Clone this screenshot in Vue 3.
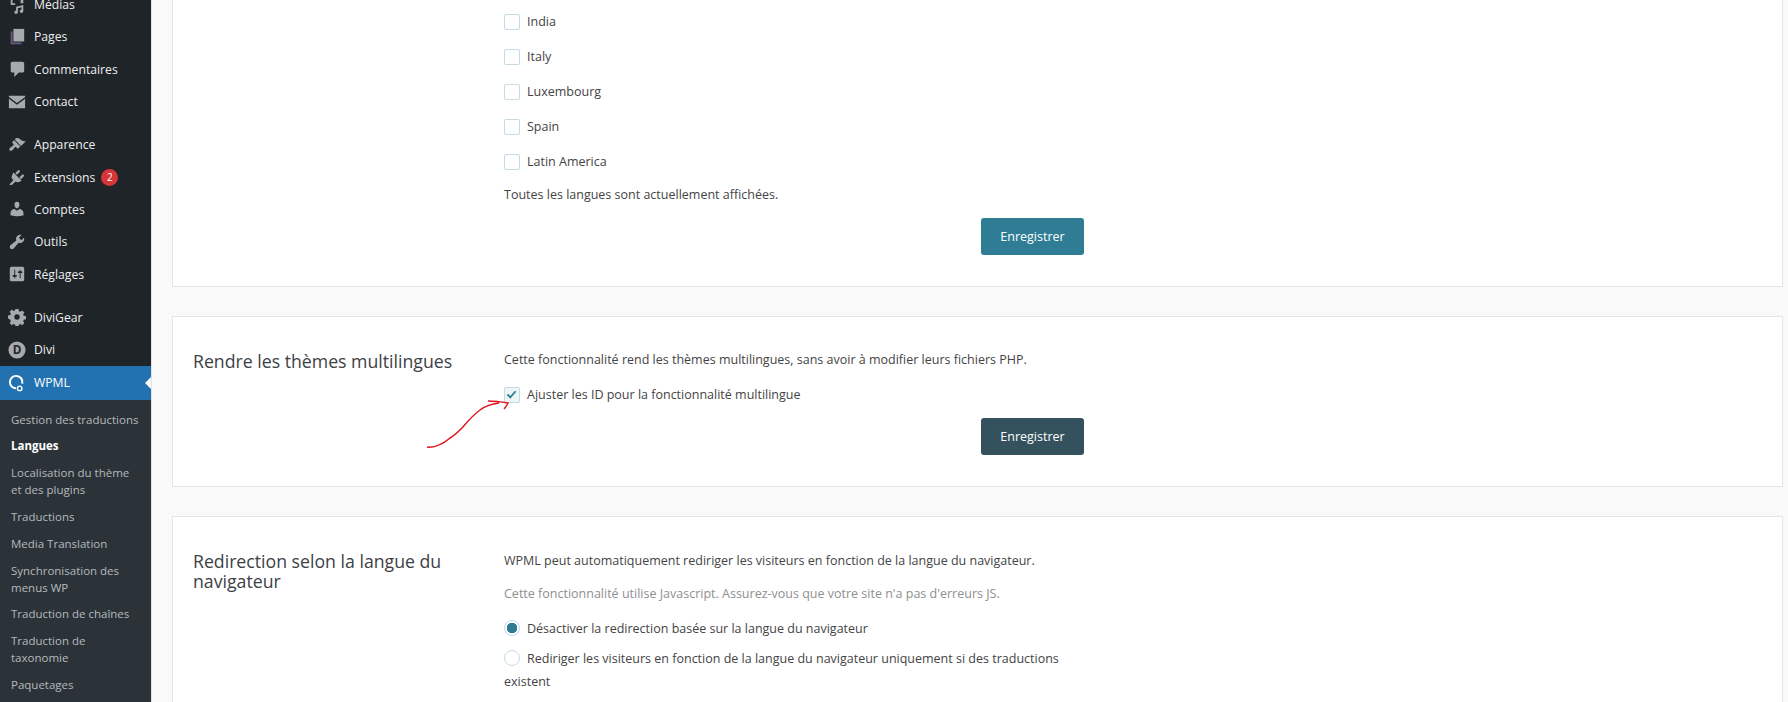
<script setup>
const topMenu = [
  { label: 'Médias', icon: 'media' },
  { label: 'Pages', icon: 'pages' },
  { label: 'Commentaires', icon: 'comments' },
  { label: 'Contact', icon: 'mail', gap: true },
  { label: 'Apparence', icon: 'brush' },
  { label: 'Extensions', icon: 'plugin', badge: 2 },
  { label: 'Comptes', icon: 'user' },
  { label: 'Outils', icon: 'wrench' },
  { label: 'Réglages', icon: 'settings', gap: true },
  { label: 'DiviGear', icon: 'gear' },
  { label: 'Divi', icon: 'divi' }
]

const subMenu = [
  { label: 'Gestion des traductions' },
  { label: 'Langues', current: true },
  { label: 'Localisation du thème et des plugins' },
  { label: 'Traductions' },
  { label: 'Media Translation' },
  { label: 'Synchronisation des menus WP' },
  { label: 'Traduction de chaînes' },
  { label: 'Traduction de taxonomie' },
  { label: 'Paquetages' }
]

const languages = ['India', 'Italy', 'Luxembourg', 'Spain', 'Latin America']
</script>

<template>
  <div class="page">
    <aside class="sidebar">
      <ul class="menu">
        <li v-for="item in topMenu" :key="item.label" class="menu-item" :class="{ gap: item.gap }">
          <svg class="menu-icon" viewBox="0 0 20 20">
            <path v-if="item.icon === 'media'" d="M3 1h7v2H5v5h3v2H3zM12 1h5v7h-3V3h-2zM9 12l8-2v7a2 2 0 1 1-2-2V12.500l-4 1V18a2 2 0 1 1-2-2z" />
            <template v-else-if="item.icon === 'pages'">
              <path d="M6 1h12v14H6z" />
              <path d="M3 4h2v12h10v2H3z" fill="#6b5a80" />
            </template>
            <path v-else-if="item.icon === 'comments'" d="M5 2h11c1.100 0 2 .9 2 2v8c0 1.100-.9 2-2 2h-4l-5 5v-5H5c-1.100 0-2-.9-2-2V4c0-1.100.9-2 2-2z" />
            <path v-else-if="item.icon === 'mail'" d="M1 3h18v1.500l-9 6.500-9-6.500zM1 6.500l9 6.500 9-6.500V17H1z" />
            <path v-else-if="item.icon === 'brush'" d="M14.480 11.060L7.410 3.990l1.500-1.500c.5-.56 2.300-.47 3.510.32 1.210.8 1.430 1.280 2.910 2.100 1.180.64 2.450 1.260 4.450.85zm-.71.71L6.700 4.700 4.930 6.470c-.39.39-.39 1.020 0 1.410l1.060 1.060c.39.39.39 1.030 0 1.420-.6.6-1.430 1.110-2.210 1.690-.35.26-.7.530-1.010.84C1.430 13.710.96 15.240 1.830 16.120c.87.87 2.410.4 3.250-.44.31-.31.58-.67.85-1.020.57-.78 1.080-1.610 1.680-2.210.39-.39 1.030-.39 1.420 0l1.060 1.060c.39.39 1.020.39 1.410 0z" />
            <path v-else-if="item.icon === 'plugin'" d="M13.110 4.360L9.870 7.600 8 5.730l3.240-3.240c.35-.34 1.050-.2 1.560.32.52.51.66 1.210.31 1.550zM17.650 9.140l-3.240 3.240-1.870-1.870 3.240-3.240c.35-.34 1.050-.2 1.560.32.52.51.66 1.210.31 1.550zM5.110 6.130l.91-1.120 9.010 9.010-1.190.84c-.71.71-2.630 1.160-3.820 1L8.400 14.900 4.300 19H2v-1.300l4-4.400-1.900-1.900c-.3-1.200.2-3.400 1.010-4.270z" />
            <path v-else-if="item.icon === 'user'" d="M10 9.250c-2.270 0-2.730-3.440-2.730-3.440C7 4.020 7.820 2 9.970 2c2.160 0 2.980 2.020 2.710 3.810 0 0-.41 3.440-2.680 3.440zm0 2.570L12.720 10c2.390 0 4.520 2.330 4.520 4.530v2.490s-3.650 1.130-7.240 1.130c-3.650 0-7.240-1.130-7.240-1.130v-2.490c0-2.250 1.940-4.480 4.470-4.480z" />
            <path v-else-if="item.icon === 'wrench'" d="M16.680 9.770c-1.340 1.340-3.300 1.670-4.950.99l-5.410 6.520c-.99.99-2.590.99-3.570 0-.99-.98-.99-2.580 0-3.570l6.520-5.420c-.68-1.650-.35-3.610.99-4.950 1.280-1.280 3.120-1.620 4.720-1.060l-2.890 2.890 2.820 2.820 2.860-2.870c.53 1.580.18 3.400-1.090 4.670z" />
            <path v-else-if="item.icon === 'settings'" fill-rule="evenodd" d="M18 16V4c0-1.100-.9-2-2-2H4c-1.100 0-2 .9-2 2v12c0 1.100.9 2 2 2h12c1.100 0 2-.9 2-2zM8 11h1c.55 0 1 .45 1 1s-.45 1-1 1H8v1.500c0 .28-.22.5-.5.5s-.5-.22-.5-.5V13H6c-.55 0-1-.45-1-1s.45-1 1-1h1V5.500c0-.28.22-.5.5-.5s.5.22.5.5V11zm5-2h-1c-.55 0-1-.45-1-1s.45-1 1-1h1V5.500c0-.28.22-.5.5-.5s.5.22.5.5V7h1c.55 0 1 .45 1 1s-.45 1-1 1h-1v5.500c0 .28-.22.5-.5.5s-.5-.22-.5-.5V9z" />
            <path v-else-if="item.icon === 'gear'" fill-rule="evenodd" d="M8.300 1h3.400l.5 2.500 1.500.6 2.100-1.400 2.400 2.400-1.400 2.100.6 1.500 2.600.5v3.400l-2.600.5-.6 1.500 1.400 2.100-2.400 2.400-2.100-1.400-1.500.6-.5 2.600H8.300l-.5-2.600-1.500-.6-2.100 1.400-2.400-2.400 1.400-2.100-.6-1.500L0 11.700V8.300l2.600-.5.6-1.500L1.800 4.200l2.400-2.400 2.100 1.400 1.500-.6zM10 7a3 3 0 1 0 0 6 3 3 0 0 0 0-6z" />
            <template v-else>
              <circle cx="10" cy="10" r="9.500" />
              <text x="10" y="14.500" class="divi-letter">D</text>
            </template>
          </svg>
          <span>{{ item.label }}</span>
          <span v-if="item.badge" class="badge">{{ item.badge }}</span>
        </li>
        <li class="menu-item active">
          <svg class="menu-icon" viewBox="0 0 20 20">
            <path d="M9 1a8 8 0 0 1 8 10l-2.300-.8A5.800 5.800 0 1 0 9 14.800V17A8 8 0 0 1 9 1z" fill="#fff" />
            <circle cx="13" cy="16" r="2.500" fill="none" stroke="#fff" stroke-width="1.500" />
          </svg>
          <span>WPML</span>
        </li>
      </ul>
      <ul class="submenu">
        <li v-for="sub in subMenu" :key="sub.label" :class="{ current: sub.current }">{{ sub.label }}</li>
      </ul>
    </aside>

    <main class="content">
      <section class="card card-first">
        <div class="card-title"></div>
        <div class="card-body">
          <label v-for="lang in languages" :key="lang" class="check-row">
            <span class="box"></span>{{ lang }}
          </label>
          <p class="status">Toutes les langues sont actuellement affichées.</p>
          <div class="actions"><button class="btn">Enregistrer</button></div>
        </div>
      </section>

      <section class="card card-second">
        <h3 class="card-title">Rendre les thèmes multilingues</h3>
        <div class="card-body">
          <p class="intro">Cette fonctionnalité rend les thèmes multilingues, sans avoir à modifier leurs fichiers PHP.</p>
          <label class="check-row tight">
            <span class="box box-on">
              <svg viewBox="0 0 16 16"><path d="M3 8l3.500 3.500L13 4" fill="none" stroke="#2e7d94" stroke-width="2.200" /></svg>
            </span>Ajuster les ID pour la fonctionnalité multilingue
          </label>
          <div class="actions"><button class="btn btn-dark">Enregistrer</button></div>
        </div>
        <svg class="arrow" viewBox="0 0 90 60">
          <path d="M2 47c9 1 16-3 23-9 5-3 8-6 12-10 6-7 11-13 18-18 4-3 10-6 19-7M63 1c7 0 14 1 20 2-1 2-2 4-4 6" fill="none" stroke="#e1141c" stroke-width="1.500" />
        </svg>
      </section>

      <section class="card card-third">
        <h3 class="card-title">Redirection selon la langue du navigateur</h3>
        <div class="card-body">
          <p class="intro">WPML peut automatiquement rediriger les visiteurs en fonction de la langue du navigateur.</p>
          <p class="muted">Cette fonctionnalité utilise Javascript. Assurez-vous que votre site n'a pas d'erreurs JS.</p>
          <label class="radio-row"><span class="radio checked"></span>Désactiver la redirection basée sur la langue du navigateur</label>
          <label class="radio-row"><span class="radio"></span>Rediriger les visiteurs en fonction de la langue du navigateur uniquement si des traductions existent</label>
        </div>
      </section>
    </main>
  </div>
</template>

<style>
html, body {
  margin: 0;
  overflow: hidden;
  background: #f9f9f9;
}
</style>

<style scoped>
.page {
  display: flex;
  height: 702px;
  overflow: hidden;
  font-family: "Open Sans", "Noto Sans", sans-serif;
  font-size: 12.500px;
  color: #444;
}

.sidebar {
  width: 151px;
  flex: none;
  background: #1f2429;
  border-right: 1px solid #e2e2e2;
  margin-top: -11.600px;
  padding-bottom: 40px;
}

.menu, .submenu {
  list-style: none;
  margin: 0;
  padding: 0;
}

.menu-item {
  display: flex;
  align-items: center;
  height: 32.400px;
  padding-left: 8px;
  color: #eee;
  font-size: 12.200px;
}

.menu-item.gap {
  margin-bottom: 10.500px;
}

.menu-icon {
  width: 18px;
  height: 18px;
  margin-right: 8px;
  fill: #a7aaad;
  flex: none;
}

.divi-letter {
  font-size: 13px;
  font-weight: 700;
  text-anchor: middle;
  fill: #1f2429;
}

.badge {
  margin-left: 6px;
  width: 17px;
  height: 17px;
  border-radius: 50%;
  background: #d63638;
  color: #fff;
  font-size: 10px;
  display: flex;
  align-items: center;
  justify-content: center;
}

.menu-item.active {
  position: relative;
  height: 34px;
  background: #2271b1;
  color: #fff;
}

.menu-item.active::after {
  content: "";
  position: absolute;
  right: 0;
  top: 11px;
  border: 6px solid transparent;
  border-right-color: #f9f9f9;
  border-left-width: 0;
}

.submenu {
  background: #2c3338;
  padding: 6px 0 10px 11px;
  font-size: 11.500px;
  line-height: 17px;
  color: #b4b9be;
}

.submenu li {
  padding: 4.900px 12px 4.900px 0;
}

.submenu li.current {
  color: #fff;
  font-weight: 700;
}

.content {
  flex: 1;
  padding-left: 20px;
  padding-right: 5px;
  display: flex;
  flex-direction: column;
  gap: 29px;
  min-width: 0;
}

.card {
  position: relative;
  flex: none;
  display: flex;
  background: #fff;
  border: 1px solid #e5e5e5;
  box-sizing: border-box;
}

.card-first {
  height: 287px;
  border-top: 0;
  padding-top: 4px;
}

.card-second {
  height: 171px;
  padding-top: 33px;
}

.card-third {
  padding-top: 33px;
  height: 300px;
}

.card-third .card-body {
  margin-top: 1px;
}

.card-title {
  width: 331px;
  flex: none;
  margin: 1px 0 0;
  padding-left: 20px;
  box-sizing: border-box;
  font-size: 17.700px;
  line-height: 20px;
  font-weight: 400;
  color: #3c4146;
}

.card-body {
  width: 580px;
  flex: none;
}

.check-row {
  display: flex;
  align-items: center;
  height: 35px;
  color: #444;
}

.box {
  width: 16px;
  height: 16px;
  flex: none;
  box-sizing: border-box;
  margin-right: 7px;
  border: 1.500px solid #c5dbe5;
  border-radius: 2px;
  background: #fff;
}

.box-on {
  background: #eef5f7;
}

.box svg {
  display: block;
  width: 13px;
  height: 13px;
}

.status {
  margin: 6px 0 0;
  line-height: 20px;
}

.actions {
  display: flex;
  justify-content: flex-end;
}

.card-first .actions {
  margin-top: 13px;
}

.card-second .actions {
  margin-top: 6px;
}

.btn {
  width: 103px;
  height: 37px;
  border: 0;
  border-radius: 3px;
  background: #2e7d94;
  color: #fff;
  font: inherit;
}

.btn-dark {
  background: #33525e;
}

.intro, .muted {
  margin: 0;
  line-height: 20px;
}

.tight {
  margin-top: 7px;
}

.muted {
  margin-top: 12.500px;
  color: #8f8f8f;
}

.radio-row {
  display: block;
  margin-top: 13px;
  line-height: 23px;
}

.radio-row + .radio-row {
  margin-top: 7px;
}

.radio {
  display: inline-block;
  box-sizing: border-box;
  width: 16px;
  height: 16px;
  margin-right: 7px;
  vertical-align: -3px;
  border: 1.500px solid #c5dbe5;
  border-radius: 50%;
  background: #fff;
}

.radio.checked {
  background: radial-gradient(circle, #2e7d94 0 5px, #fff 5.500px);
}

.arrow {
  position: absolute;
  left: 252px;
  top: 83px;
  width: 90px;
  height: 60px;
}
</style>
